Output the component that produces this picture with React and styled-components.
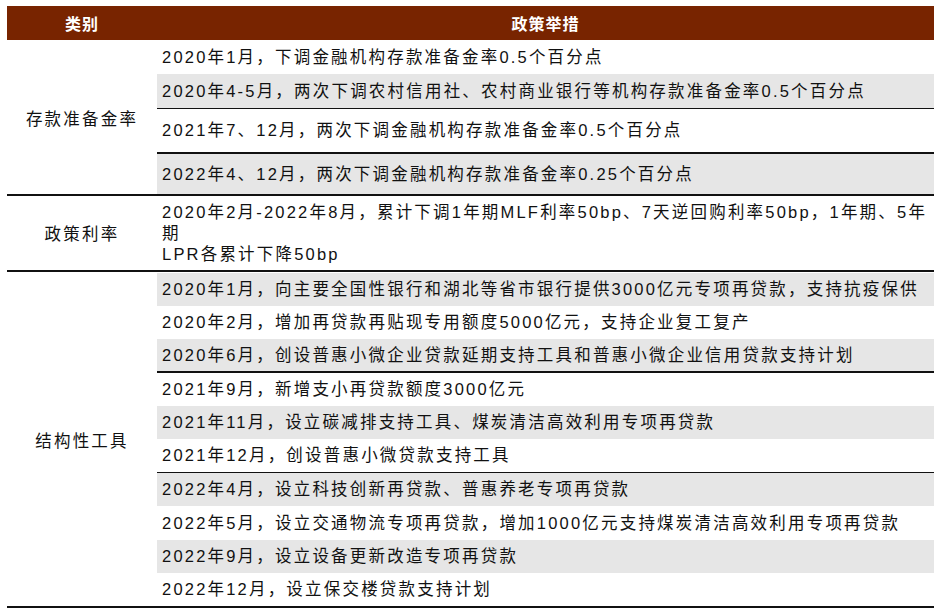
import React from "react";
import styled, { createGlobalStyle } from "styled-components";

const Global = createGlobalStyle`
  body { margin: 0; background: #fff; font-family: "Liberation Sans", "Noto Sans CJK SC", sans-serif; }
`;

const Table = styled.div`
  margin: 6px 9px 0 7px;
  width: 927px;
  color: #111;
  font-size: 16.5px;
  letter-spacing: 2.2px;
`;

const Header = styled.div`
  display: grid;
  grid-template-columns: 150px 1fr;
  height: 34px;
  background: #782400;
  color: #fff;
  font-weight: bold;
  font-size: 16px;
  letter-spacing: 1px;
  align-items: center;
  text-align: center;
`;

const Section = styled.div`
  display: grid;
  grid-template-columns: 150px 1fr;
  border-bottom: 2px solid #111;
  margin-top: ${(p) => p.$mt || 0}px;
`;

const Cat = styled.div`
  display: flex;
  align-items: center;
  justify-content: center;
`;

const Items = styled.div`
  display: flex;
  flex-direction: column;
`;

const Item = styled.div`
  height: ${(p) => p.$h}px;
  display: flex;
  align-items: center;
  padding-left: 5px;
  background: ${(p) => (p.$g ? "#e6e6e6" : "transparent")};
  border-bottom: ${(p) => (p.$b ? `${p.$b}px solid #111` : "none")};
  line-height: 21px;
  white-space: pre-wrap;
`;

const data = [
  {
    cat: "存款准备金率",
    mt: 1,
    items: [
      { t: "2020年1月，下调金融机构存款准备金率0.5个百分点", h: 33 },
      { t: "2020年4-5月，两次下调农村信用社、农村商业银行等机构存款准备金率0.5个百分点", h: 34, g: 1, b: 1 },
      { t: "2021年7、12月，两次下调金融机构存款准备金率0.5个百分点", h: 43, b: 2 },
      { t: "2022年4、12月，两次下调金融机构存款准备金率0.25个百分点", h: 40, g: 1 },
    ],
  },
  {
    cat: "政策利率",
    items: [
      { t: "2020年2月-2022年8月，累计下调1年期MLF利率50bp、7天逆回购利率50bp，1年期、5年期\nLPR各累计下降50bp", h: 74 },
    ],
  },
  {
    cat: "结构性工具",
    mt: 1,
    items: [
      { t: "2020年1月，向主要全国性银行和湖北等省市银行提供3000亿元专项再贷款，支持抗疫保供", h: 33, g: 1 },
      { t: "2020年2月，增加再贷款再贴现专用额度5000亿元，支持企业复工复产", h: 33 },
      { t: "2020年6月，创设普惠小微企业贷款延期支持工具和普惠小微企业信用贷款支持计划", h: 32, g: 1, b: 2 },
      { t: "2021年9月，新增支小再贷款额度3000亿元", h: 33 },
      { t: "2021年11月，设立碳减排支持工具、煤炭清洁高效利用专项再贷款", h: 33, g: 1 },
      { t: "2021年12月，创设普惠小微贷款支持工具", h: 33, b: 1 },
      { t: "2022年4月，设立科技创新再贷款、普惠养老专项再贷款", h: 33, g: 1 },
      { t: "2022年5月，设立交通物流专项再贷款，增加1000亿元支持煤炭清洁高效利用专项再贷款", h: 34 },
      { t: "2022年9月，设立设备更新改造专项再贷款", h: 33, g: 1 },
      { t: "2022年12月，设立保交楼贷款支持计划", h: 33 },
    ],
  },
];

export default function App() {
  return (
    <>
      <Global />
      <Table>
        <Header>
          <div>类别</div>
          <div>政策举措</div>
        </Header>
        {data.map((s) => (
          <Section key={s.cat} $mt={s.mt}>
            <Cat>{s.cat}</Cat>
            <Items>
              {s.items.map((it, i) => (
                <Item key={i} $h={it.h} $g={it.g} $b={it.b}>
                  {it.t}
                </Item>
              ))}
            </Items>
          </Section>
        ))}
      </Table>
    </>
  );
}
